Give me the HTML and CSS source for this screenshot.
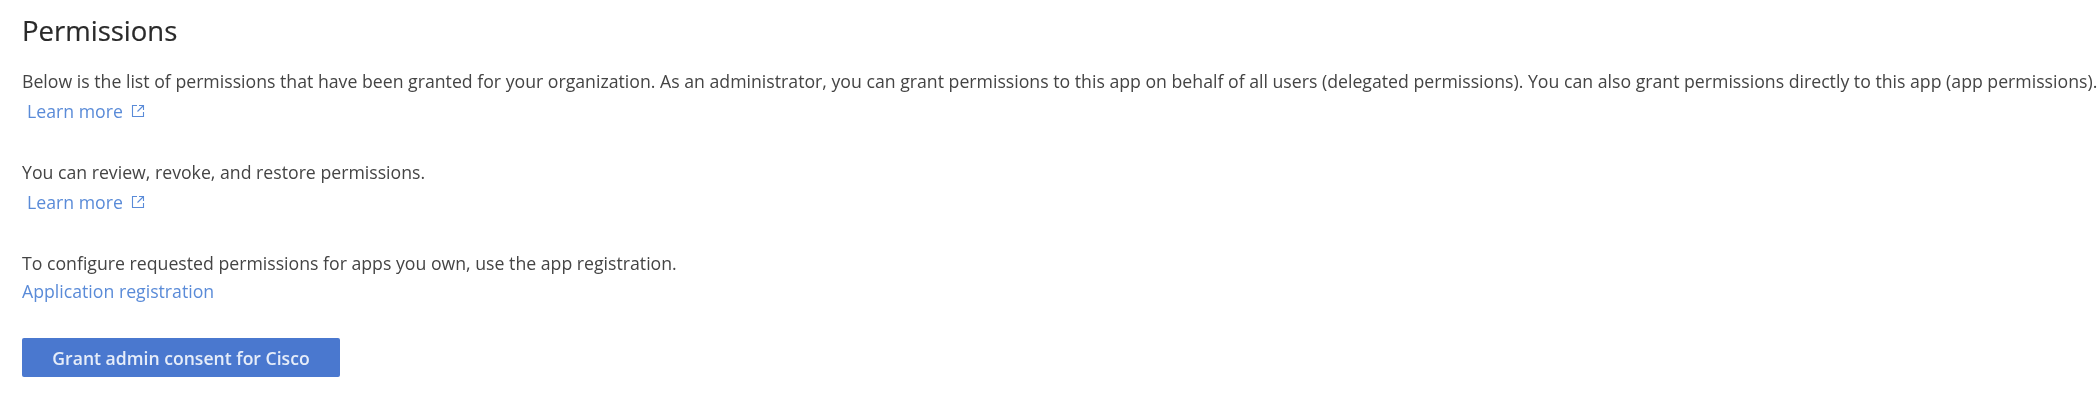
FILE: index.html
```html
<!DOCTYPE html>
<html lang="en">
<head>
    <meta charset="UTF-8">
    <title>Permissions</title>
    <link rel="stylesheet" href="styles.css">
</head>
<body>
<div class="container">
    <h1>Permissions</h1>
    <div class="block first">
        <p>Below is the list of permissions that have been granted for your organization. As an administrator, you can grant permissions to this app on behalf of all users (delegated permissions). You can also grant permissions directly to this app (app permissions).</p>
        <a href="#" class="learn-more">Learn more
            <svg class="external" viewBox="0 0 14 14" width="14" height="14" fill="none" stroke="currentColor" stroke-width="1.1">
                <path d="M6 1.5H1.5v11h11V8"/>
                <path d="M8 1.5h4.5V6M12.5 1.5 6.5 7.5"/>
            </svg>
        </a>
    </div>
    <div class="block">
        <p>You can review, revoke, and restore permissions.</p>
        <a href="#" class="learn-more">Learn more
            <svg class="external" viewBox="0 0 14 14" width="14" height="14" fill="none" stroke="currentColor" stroke-width="1.1">
                <path d="M6 1.5H1.5v11h11V8"/>
                <path d="M8 1.5h4.5V6M12.5 1.5 6.5 7.5"/>
            </svg>
        </a>
    </div>
    <div class="block last">
        <p>To configure requested permissions for apps you own, use the app registration.</p>
        <a href="#" class="registration">Application registration</a>
    </div>
    <button type="button" class="grant">Grant admin consent for Cisco</button>
</div>
</body>
</html>
```

FILE: styles.css
```css
body {
    margin: 0;
    background-color: #ffffff;
    font-family: "Open Sans", "Noto Sans", Arial, sans-serif;
    color: #444444;
}
.container {
    padding: 13px 0 0 22px;
    font-size: 17.7px;
    line-height: 30px;
    filter: blur(0.5px);
}
h1 {
    margin: 0 0 17px;
    font-size: 27.5px;
    line-height: 36px;
    font-weight: 400;
    -webkit-text-stroke: 0.2px #2a2a2a;
    color: #2a2a2a;
}
p {
    margin: 0;
    white-space: nowrap;
}
a {
    display: block;
    color: #5a8bd8;
    text-decoration: none;
}
.block {
    margin-bottom: 31px;
}
.block.last {
    margin-bottom: 32px;
}
.registration {
    margin-top: -2px;
}
.learn-more {
    display: flex;
    align-items: center;
    gap: 8px;
    padding-left: 5px;
}
.grant {
    display: block;
    width: 318px;
    height: 39px;
    border: none;
    border-radius: 2px;
    background-color: #4a78cf;
    color: #e6edf9;
    font-family: inherit;
    font-size: 17.6px;
    font-weight: 600;
}
```
